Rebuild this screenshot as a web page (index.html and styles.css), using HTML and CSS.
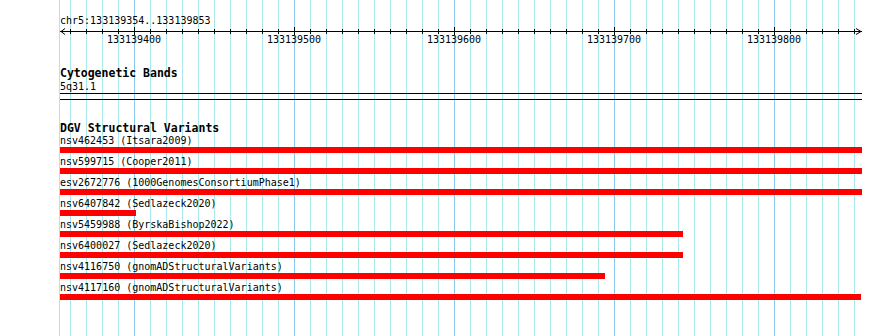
FILE: index.html
```html
<!DOCTYPE html>
<html lang="en">
<head>
    <meta charset="UTF-8">
    <title>chr5:133139354..133139853</title>
    <link rel="stylesheet" href="styles.css">
</head>
<body>
    <div class="view">
        <div class="location">chr5:133139354..133139853</div>

        <svg class="ruler" width="802" height="9" viewBox="0 0 802 9">
            <defs>
                <pattern id="minorTick" x="10" y="0" width="16" height="9" patternUnits="userSpaceOnUse">
                    <rect x="0" y="3" width="1" height="5" fill="#000"/>
                </pattern>
            </defs>
            <rect x="10" y="0" width="785" height="9" fill="url(#minorTick)"/>
            <rect x="74" y="1" width="1" height="8"/>
            <rect x="234" y="1" width="1" height="8"/>
            <rect x="394" y="1" width="1" height="8"/>
            <rect x="554" y="1" width="1" height="8"/>
            <rect x="714" y="1" width="1" height="8"/>
            <line x1="0" y1="5.5" x2="802" y2="5.5" stroke="#000" stroke-width="1"/>
            <polyline points="5,2.5 1,5.5 5,8.5" fill="none" stroke="#000"/>
            <polyline points="796,2.5 801,5.5 796,8.5" fill="none" stroke="#000"/>
        </svg>

        <div class="tick-labels">
            <span>133139400</span>
            <span>133139500</span>
            <span>133139600</span>
            <span>133139700</span>
            <span>133139800</span>
        </div>

        <div class="track-title">Cytogenetic Bands</div>
        <div class="feature-label">5q31.1</div>
        <div class="band"></div>

        <div class="track-title">DGV Structural Variants</div>
        <div class="variant">
            <div class="feature-label">nsv462453 (Itsara2009)</div>
            <div class="bar" style="width: 802px"></div>
        </div>
        <div class="variant">
            <div class="feature-label">nsv599715 (Cooper2011)</div>
            <div class="bar" style="width: 802px"></div>
        </div>
        <div class="variant">
            <div class="feature-label">esv2672776 (1000GenomesConsortiumPhase1)</div>
            <div class="bar" style="width: 802px"></div>
        </div>
        <div class="variant">
            <div class="feature-label">nsv6407842 (Sedlazeck2020)</div>
            <div class="bar" style="width: 76px"></div>
        </div>
        <div class="variant">
            <div class="feature-label">nsv5459988 (ByrskaBishop2022)</div>
            <div class="bar" style="width: 623px"></div>
        </div>
        <div class="variant">
            <div class="feature-label">nsv6400027 (Sedlazeck2020)</div>
            <div class="bar" style="width: 623px"></div>
        </div>
        <div class="variant">
            <div class="feature-label">nsv4116750 (gnomADStructuralVariants)</div>
            <div class="bar" style="width: 545px"></div>
        </div>
        <div class="variant">
            <div class="feature-label">nsv4117160 (gnomADStructuralVariants)</div>
            <div class="bar" style="width: 801px"></div>
        </div>
    </div>
</body>
</html>
```

FILE: styles.css
```css
body {
    margin: 0;
    background-color: #ffffff;
    color: #000000;
    font-family: 'DejaVu Sans Mono', monospace;
    font-size: 10px;
}
.view {
    box-sizing: border-box;
    margin-left: 59px;
    width: 803px;
    min-height: 100vh;
    border-left: 1px solid #aae8ee;
    background-image:
        repeating-linear-gradient(90deg, transparent 0 74px, #88c8ea 74px 75px, transparent 75px 160px),
        repeating-linear-gradient(90deg, transparent 0 10px, #aae8ee 10px 11px, transparent 11px 16px);
}
.location {
    padding-top: 16px;
    line-height: 10px;
    white-space: nowrap;
}
.ruler {
    display: block;
}
.tick-labels {
    display: flex;
    margin-left: -6px;
    line-height: 10px;
}
.tick-labels span {
    flex: 0 0 160px;
    text-align: center;
}
.track-title {
    margin-top: 21px;
    font-size: 11.5px;
    font-weight: bold;
    line-height: 14px;
    white-space: nowrap;
}
.feature-label {
    margin-top: 1px;
    line-height: 11px;
    white-space: nowrap;
}
.band {
    margin-top: 1px;
    height: 5px;
    border-top: 1px solid #000;
    border-bottom: 1px solid #000;
}
.variant .feature-label {
    margin-top: 0;
}
.variant {
    margin-bottom: 3px;
}
.bar {
    margin-top: 1px;
    height: 6px;
    background-color: #ff0000;
}
```
